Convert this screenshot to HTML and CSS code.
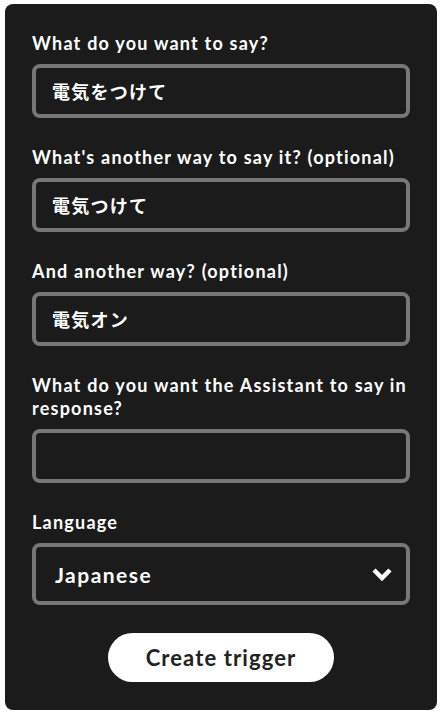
FILE: index.html
```html
<!DOCTYPE html>
<html lang="en">
<head>
    <meta charset="UTF-8">
    <meta name="viewport" content="width=device-width, initial-scale=1.0">
    <title>Say a phrase with a text ingredient</title>
    <link rel="stylesheet" href="styles.css">
</head>
<body>

<div class="card">
    <form class="trigger-form" onsubmit="return false">
        <div class="field">
            <label class="field-label" for="phrase">What do you want to say?</label>
            <input class="field-input" id="phrase" type="text" value="電気をつけて">
        </div>
        <div class="field">
            <label class="field-label" for="phrase2">What's another way to say it? (optional)</label>
            <input class="field-input" id="phrase2" type="text" value="電気つけて">
        </div>
        <div class="field">
            <label class="field-label" for="phrase3">And another way? (optional)</label>
            <input class="field-input" id="phrase3" type="text" value="電気オン">
        </div>
        <div class="field">
            <label class="field-label" for="response">What do you want the Assistant to say in response?</label>
            <input class="field-input" id="response" type="text" value="">
        </div>
        <div class="field">
            <label class="field-label" for="language">Language</label>
            <div class="select-wrap">
                <select class="field-select" id="language">
                    <option>Japanese</option>
                    <option>English</option>
                </select>
                <svg class="chevron" width="22" height="16" viewBox="0 0 22 16">
                    <polyline points="3,4 11,12 19,4" fill="none" stroke="#fff" stroke-width="4.5"/>
                </svg>
            </div>
        </div>
        <div class="actions">
            <button class="create-btn" type="submit">Create trigger</button>
        </div>
    </form>
</div>

</body>
</html>
```

FILE: styles.css
```css
body {
    margin: 0;
    padding: 0;
    background: #fff;
    font-family: Lato, 'Noto Sans CJK JP', sans-serif;
}

.card {
    box-sizing: border-box;
    width: 432px;
    margin: 4px 0 0 5px;
    padding: 28px 27px;
    background: #1b1b1b;
    border-radius: 8px;
}

.field {
    display: flex;
    flex-direction: column;
    margin-bottom: 28px;
}

.field-label {
    color: #fff;
    font-size: 18px;
    font-weight: 700;
    line-height: 23px;
    letter-spacing: 0.068em;
    margin-bottom: 9px;
}

.field-input,
.field-select {
    box-sizing: border-box;
    width: 100%;
    height: 54px;
    margin: 0;
    padding: 0 16px;
    border: 4px solid #777;
    border-radius: 8px;
    background: #1b1b1b;
    color: #fff;
    font-family: Lato, 'Noto Sans CJK JP', sans-serif;
    font-size: 18px;
    font-weight: 700;
    letter-spacing: 0.07em;
    outline: none;
}

.select-wrap {
    position: relative;
}

.field-select {
    height: 62px;
    padding: 0 19px;
    font-size: 21px;
    appearance: none;
    -webkit-appearance: none;
}

.chevron {
    position: absolute;
    right: 17px;
    top: 23px;
    pointer-events: none;
}

.actions {
    display: flex;
    justify-content: center;
}

.create-btn {
    width: 226px;
    height: 49px;
    border: none;
    border-radius: 25px;
    background: #fff;
    color: #222;
    font-family: Lato, sans-serif;
    font-size: 22px;
    font-weight: 700;
    letter-spacing: 0.05em;
    cursor: pointer;
}
```
